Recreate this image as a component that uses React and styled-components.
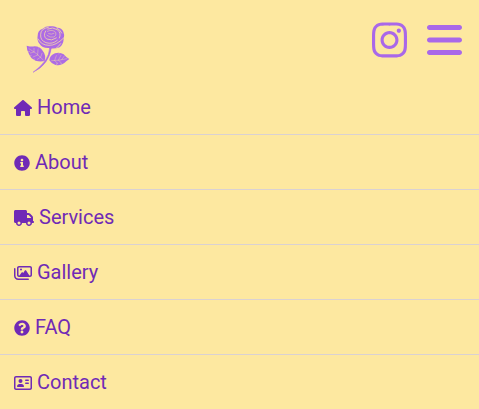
import React from "react";
import styled, { createGlobalStyle } from "styled-components";
import { FaInfoCircle, FaQuestionCircle } from "react-icons/fa";
import {
  FaBars,
  FaHouse,
  FaInstagram,
  FaRegAddressCard,
  FaRegImages,
  FaTruck,
} from "react-icons/fa6";

const GlobalStyle = createGlobalStyle`
  * { box-sizing: border-box; }
  body {
    margin: 0;
    overflow: hidden;
    background: #fde8a0;
    font-family: Roboto, sans-serif;
  }
`;

const Page = styled.div`
  height: 409px;
  overflow: hidden;
  background: #fde8a0;
`;

const Header = styled.header`
  display: flex;
  align-items: center;
  justify-content: space-between;
  height: 80px;
  padding: 0 17px 0 20px;
`;

const Logo = styled.a`
  display: block;
  width: 56px;
  height: 56px;
  margin-top: 16px;
  color: #ad6be4;
`;

const Actions = styled.div`
  display: flex;
  gap: 20px;
  color: #a968e9;

  svg {
    display: block;
    width: 35px;
    height: 40px;
  }
`;

const Menu = styled.ul`
  margin: 0;
  padding: 0;
  list-style: none;
`;

const MenuItem = styled.li`
  height: 55px;
  border-bottom: 1px solid #d9d1d3;
`;

const MenuLink = styled.a`
  display: flex;
  align-items: center;
  gap: 5px;
  height: 54px;
  padding-left: 14px;
  color: #702ab6;
  font-size: 20px;
  font-weight: 400;
  line-height: 24px;

  svg {
    flex: none;
    width: ${({ $iconWidth }) => $iconWidth}px;
    height: 16px;
    margin-top: 2px;
  }
`;

const items = [
  { label: "Home", Icon: FaHouse, width: 18 },
  { label: "About", Icon: FaInfoCircle, width: 16 },
  { label: "Services", Icon: FaTruck, width: 20 },
  { label: "Gallery", Icon: FaRegImages, width: 18 },
  { label: "FAQ", Icon: FaQuestionCircle, width: 16 },
  { label: "Contact", Icon: FaRegAddressCard, width: 18 },
];

function Rose() {
  return (
    <svg viewBox="0 0 168 168" width="56" height="56" aria-label="Rose">
      <g fill="currentColor">
        <path d="M68 26Q78 17 94 19Q104 17 112 23Q125 23 130 35Q135 45 131 57Q130 73 119 82Q103 88 86 84Q67 85 59 72Q50 62 53 47Q53 31 68 26Z" />
        <path d="M20 77Q34 81 43 79Q60 79 68 92Q79 105 74 123Q60 126 47 122Q33 117 27 102Q20 91 20 77Z" />
        <path d="M88 121Q89 106 105 100Q119 95 131 103Q137 111 148 117Q139 123 133 129Q119 139 105 134Q94 131 88 121Z" />
      </g>
      <path d="M94 84Q91 106 78 125Q64 145 39 157Q65 138 77 119Q87 105 89 84Z" fill="currentColor" stroke="currentColor" strokeWidth="1.5" />
      <g fill="none" stroke="#fde8a0" strokeWidth="2.1" strokeLinecap="round">
        <path d="M85 22Q62 26 62 43Q60 61 78 68Q97 74 112 61" />
        <path d="M83 27Q99 20 112 29Q125 40 118 54" />
        <path d="M77 33Q68 48 80 57Q95 64 109 54" />
        <path d="M82 34Q98 27 107 37Q111 46 102 51Q89 54 81 46" strokeWidth="1.4" />
        <path d="M86 41Q94 45 102 40" strokeWidth="1.4" />
        <path d="M54 57Q64 76 87 76Q108 77 131 54" />
        <path d="M111 25Q121 29 125 39" />
        <path d="M108 85Q117 79 122 71" />
      </g>
      <g fill="none" stroke="#fde8a0" strokeWidth="1.1" strokeLinecap="round">
        <path d="M27 86Q51 99 70 120M42 95V85M53 104L54 89M62 112L66 100M42 96L31 99M53 105L39 111M61 112L52 118" />
        <path d="M95 122Q117 122 141 116M104 121L109 107M115 121L123 106M125 119L133 108M104 122L113 130M116 121L124 129" />
        <path d="M23 96L29 94M28 109L34 106M39 121L44 117M58 80L56 84M119 98L116 102M109 136L111 130M124 135L123 130" />
      </g>
    </svg>
  );
}

export default function App() {
  return (
    <Page>
      <GlobalStyle />
      <Header>
        <Logo>
          <Rose />
        </Logo>
        <Actions>
          <FaInstagram />
          <FaBars />
        </Actions>
      </Header>
      <Menu>
        {items.map(({ label, Icon, width }) => (
          <MenuItem key={label}>
            <MenuLink $iconWidth={width}>
              <Icon />
              {label}
            </MenuLink>
          </MenuItem>
        ))}
      </Menu>
    </Page>
  );
}
